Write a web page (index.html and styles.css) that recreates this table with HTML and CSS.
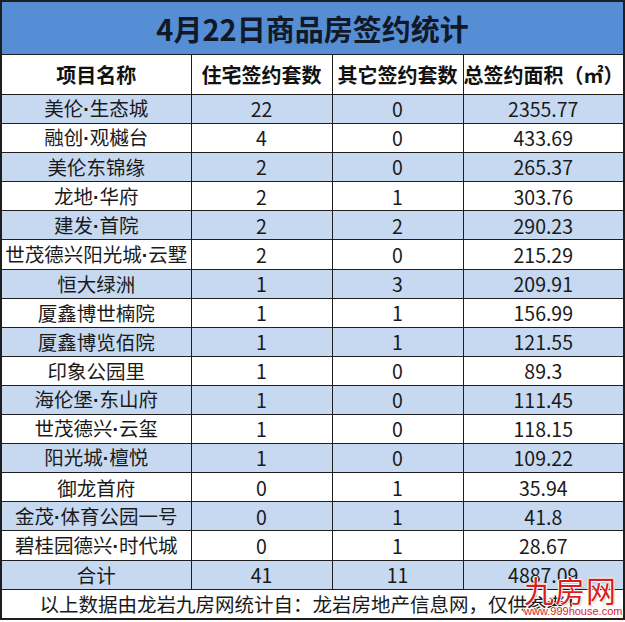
FILE: index.html
```html
<!DOCTYPE html>
<html lang="zh-CN">
<head>
<meta charset="utf-8">
<title>4月22日商品房签约统计</title>
<link rel="stylesheet" href="styles.css">
</head>
<body>
<div class="sheet">
  <table class="stats">
    <colgroup>
      <col class="c1"><col class="c2"><col class="c3"><col class="c4">
    </colgroup>
    <thead>
      <tr class="title"><th colspan="4">4月22日商品房签约统计</th></tr>
      <tr class="head"><th>项目名称</th><th>住宅签约套数</th><th>其它签约套数</th><th>总签约面积（㎡）</th></tr>
    </thead>
    <tbody>
      <tr class="alt"><td>美伦<span class="dot">·</span>生态城</td><td>22</td><td>0</td><td>2355.77</td></tr>
      <tr><td>融创<span class="dot">·</span>观樾台</td><td>4</td><td>0</td><td>433.69</td></tr>
      <tr class="alt"><td>美伦东锦缘</td><td>2</td><td>0</td><td>265.37</td></tr>
      <tr><td>龙地<span class="dot">·</span>华府</td><td>2</td><td>1</td><td>303.76</td></tr>
      <tr class="alt"><td>建发<span class="dot">·</span>首院</td><td>2</td><td>2</td><td>290.23</td></tr>
      <tr><td>世茂德兴阳光城<span class="dot">·</span>云墅</td><td>2</td><td>0</td><td>215.29</td></tr>
      <tr class="alt"><td>恒大绿洲</td><td>1</td><td>3</td><td>209.91</td></tr>
      <tr><td>厦鑫博世楠院</td><td>1</td><td>1</td><td>156.99</td></tr>
      <tr class="alt"><td>厦鑫博览佰院</td><td>1</td><td>1</td><td>121.55</td></tr>
      <tr><td>印象公园里</td><td>1</td><td>0</td><td>89.3</td></tr>
      <tr class="alt"><td>海伦堡<span class="dot">·</span>东山府</td><td>1</td><td>0</td><td>111.45</td></tr>
      <tr><td>世茂德兴<span class="dot">·</span>云玺</td><td>1</td><td>0</td><td>118.15</td></tr>
      <tr class="alt"><td>阳光城<span class="dot">·</span>檀悦</td><td>1</td><td>0</td><td>109.22</td></tr>
      <tr><td>御龙首府</td><td>0</td><td>1</td><td>35.94</td></tr>
      <tr class="alt"><td>金茂<span class="dot">·</span>体育公园一号</td><td>0</td><td>1</td><td>41.8</td></tr>
      <tr><td>碧桂园德兴<span class="dot">·</span>时代城</td><td>0</td><td>1</td><td>28.67</td></tr>
      <tr class="alt"><td>合计</td><td>41</td><td>11</td><td>4887.09</td></tr>
    </tbody>
    <tfoot>
      <tr class="note"><td colspan="4">以上数据由龙岩九房网统计自：龙岩房地产信息网，仅供参考！</td></tr>
    </tfoot>
  </table>
  <div class="logo">
    <div class="logo-name">九房网</div>
    <div class="logo-url">www.999house.com</div>
  </div>
</div>
</body>
</html>
```
FILE: styles.css
```css
html, body {
  margin: 0;
  padding: 0;
  background: #ffffff;
}
.sheet {
  position: relative;
  width: 625px;
  height: 622px;
  overflow: hidden;
}
.stats {
  width: 623px;
  border-collapse: collapse;
  table-layout: fixed;
  font-family: "Noto Sans CJK SC", "Microsoft YaHei", sans-serif;
  color: #1a1a1a;
  border: 2px solid #1e1e1e;
}
.c1 { width: 190px; }
.c2 { width: 141px; }
.c3 { width: 131px; }
.c4 { width: 161px; }
.stats th, .stats td {
  border: 1px solid #1e1e1e;
  padding: 0;
  text-align: center;
  white-space: nowrap;
  overflow: hidden;
}
.dot {
  font-family: "Liberation Sans", Arial, sans-serif;
  font-weight: 700;
}
.title th {
  height: 52px;
  background: #558ed5;
  font-size: 29px;
  font-weight: 700;
  color: #111827;
}
.head th {
  height: 39px;
  font-size: 20px;
  font-weight: 700;
  color: #111;
}
.stats tbody td {
  height: 28.1px;
  font-size: 19.5px;
  line-height: 1;
}
.stats tbody tr.alt td {
  background: #c6d9f1;
}
.note td {
  height: 28px;
  font-size: 19.5px;
  line-height: 1;
}
.logo {
  position: absolute;
  left: 524px;
  top: 574px;
  width: 101px;
  pointer-events: none;
}
.logo-name {
  font-family: "Noto Sans CJK SC", sans-serif;
  font-weight: 400;
  font-size: 30px;
  line-height: 31px;
  color: #d81e1e;
  letter-spacing: 1px;
  white-space: nowrap;
  text-shadow: 1px 0 #fff, -1px 0 #fff, 0 1px #fff, 0 -1px #fff, 1px 1px 1px rgba(0,0,0,0.35);
}
.logo-url {
  font-family: "Liberation Sans", Arial, sans-serif;
  font-size: 11px;
  line-height: 12px;
  color: #d81e1e;
  white-space: nowrap;
  text-shadow: 1px 0 #fff, -1px 0 #fff, 0 1px #fff, 0 -1px #fff;
}
```
